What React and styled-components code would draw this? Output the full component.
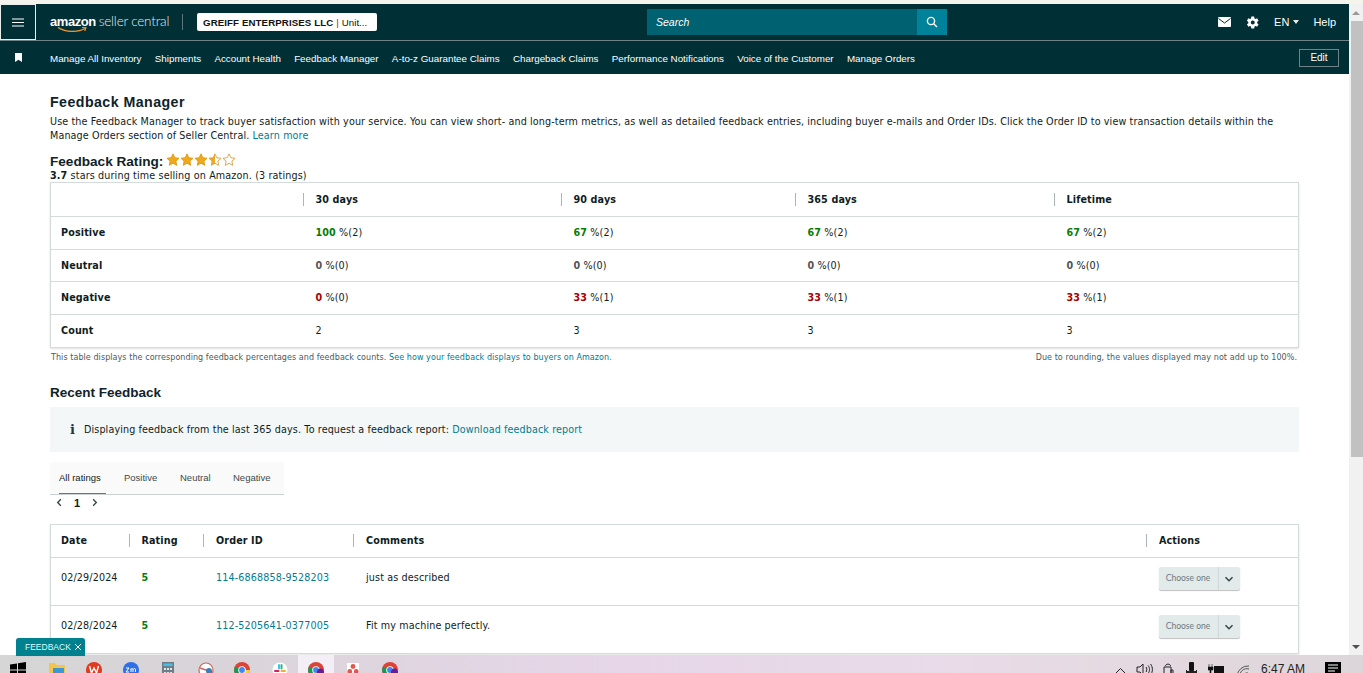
import React from "react";
import styled, { createGlobalStyle } from "styled-components";

const Global = createGlobalStyle`
  html, body { margin: 0; padding: 0; height: 100%; overflow: hidden; background: #fff; }
  * { box-sizing: border-box; }
`;
const Page = styled.div`
  height: 673px; width: 1363px; display: flex; flex-direction: column; position: relative; overflow: hidden;
  font-family: "DejaVu Sans", sans-serif; font-size: 9.6px; color: #0f1c22;
`;
const TopStrip = styled.div`height: 4px; background: #f4f4ec; flex: none;`;
const Viewport = styled.div`flex: 1; min-height: 0; display: flex;`;
const Column = styled.div`flex: 1; min-width: 0; display: flex; flex-direction: column; overflow: hidden;`;

const Header = styled.header`
  height: 37px; flex: none; background: #002f36; border-bottom: 1px solid #6f8285; display: flex; align-items: center;
  font-family: "Liberation Sans", sans-serif; color: #fff;
`;
const Burger = styled.button`
  width: 36px; height: 36px; background: transparent; border: 1px solid #e8eeee; padding: 0;
  display: flex; align-items: center; justify-content: center; flex: none;
`;
const Logo = styled.div`position: relative; margin-left: 14px; display: flex; align-items: baseline; gap: 3px; width: 120px; margin-top: -3px;`;
const LogoAmazon = styled.span`font: 700 13px "Liberation Sans", sans-serif; letter-spacing: -.45px; color: #fff;`;
const LogoSeller = styled.span`font: 300 13.5px "Lato", sans-serif; letter-spacing: -.2px; color: #e6eded; white-space: nowrap;`;
const Smile = styled.svg`position: absolute; left: 7px; top: 13px;`;
const LogoRule = styled.div`width: 1px; height: 16px; background: #5f7579; margin-left: 12px;`;
const Account = styled.div`
  margin-left: 14px; width: 180px; height: 18px; background: #fff; border-radius: 2px; display: flex; align-items: center; padding-left: 6px;
  color: #111; font-size: 9.7px; white-space: nowrap;
  b { font-weight: 700; letter-spacing: .1px; }
  i { font-style: normal; color: #8b2a4a; margin: 0 3px; }
`;
const SearchBox = styled.div`
  margin-left: 270px; width: 300px; height: 26px; background: #006170; display: flex; align-items: center; justify-content: space-between;
  font-style: italic; font-size: 10.5px; padding-left: 9px;
`;
const SearchBtn = styled.div`width: 30px; height: 26px; background: #00829a; display: flex; align-items: center; justify-content: center;`;
const HeaderRight = styled.div`margin-left: auto; display: flex; align-items: center; font-size: 11px; padding-right: 13px;`;
const Lang = styled.span`margin-left: 14px; display: flex; align-items: center; gap: 3px; `;
const Caret = styled.span`border: 3px solid transparent; border-top: 4px solid #e8eeee; border-bottom: 0; width: 0; height: 0; margin-left: 1px;`;
const HelpLink = styled.span`margin-left: 14px;`;
const GearWrap = styled.span`margin-left: 14px; display: flex;`;

const Nav = styled.nav`
  height: 33px; flex: none; background: #002f36; display: flex; align-items: center; color: #fff;
  font: 9.8px "Liberation Sans", sans-serif; padding-left: 15px; padding-right: 10px;
`;
const NavItems = styled.div`display: flex; gap: 13.3px; margin-left: 28px; white-space: nowrap; padding-top: 2px;`;
const EditBtn = styled.div`
  margin-left: auto; width: 40px; height: 18px; border: 1px solid #6f8285; display: flex; align-items: center; justify-content: center;
  font-size: 10px;
`;

const Content = styled.main`flex: 1; padding: 20px 50px 0; width: 100%; `;
const Title = styled.h1`font: 700 14.2px "Liberation Sans", sans-serif; margin: 0 0 5px; letter-spacing: .45px; color: #0f2229;`;
const Para = styled.p`margin: 0; line-height: 14px; width: 1245px; white-space: pre-line; letter-spacing: .12px;`;
const Link = styled.span`color: #007c8f;`;
const RatingHead = styled.div`display: flex; align-items: center; margin-top: 11px; font: 700 13.6px "Liberation Sans", sans-serif; height: 14px; color: #0f2229;`;
const StarRow = styled.span`display: flex; margin-left: 3px; margin-top: -3px;`;
const RatingLine = styled.div`line-height: 12px; margin-top: 2px; letter-spacing: .14px; b { font-weight: 700; }`;
const Card = styled.div`
  border: 1px solid #d5dbdb; box-shadow: 0 1px 2px rgba(0,0,0,.12); width: 1249px; background: #fff; overflow: hidden;
`;
const Row = styled.div`
  display: grid; grid-template-columns: ${p => p.$cols}; height: ${p => p.$h}px; align-items: center;
  padding-bottom: ${p => p.$pb ?? 0}px;
  & + & { border-top: 1px solid #d5dbdb; }
`;
const Cell = styled.div`padding-left: ${p => p.$pad ?? 12.5}px; white-space: nowrap; letter-spacing: .13px;`;
const HeadCell = styled(Cell)`
  font-weight: 700; position: relative;
  ${p => p.$rule ? `&::before { content: ""; position: absolute; left: 0; top: -1px; height: 13px; width: 1px; background: #aab7b8; }` : ""}
`;
const Label = styled(Cell)`font-weight: 700; padding-left: 10px;`;
const Num = styled.b`color: ${p => p.$c};`;
const Notes = styled.div`display: flex; justify-content: space-between; width: 1249px; padding: 5px 2px 0 1px; font-size: 8px; color: #4a5a60; letter-spacing: .07px;`;
const H2 = styled.h2`font: 700 13.5px "Liberation Sans", sans-serif; margin: 22px 0 0; line-height: 18px; color: #0f2229;`;
const InfoBar = styled.div`
  margin-top: 5px; height: 45px; width: 1249px; background: #f3f7f7; display: flex; align-items: center; padding-left: 20px; gap: 10px; letter-spacing: .12px;
`;
const InfoMark = styled.span`font: 700 13px "DejaVu Serif", serif; color: #24343a; width: 4px;`;
const Tabs = styled.div`
  margin-top: 10px; width: 234px; height: 33px; background: #fafafa; border-bottom: 1px solid #ccd2d2; display: flex;
  font: 9.5px "Liberation Sans", sans-serif; color: #3c4a50;
`;
const Tab = styled.div`
  height: 32px; margin-left: ${p => p.$ml}px; display: flex; align-items: center; width: ${p => p.$w}px; white-space: nowrap;
  ${p => p.$on ? "border-bottom: 1px solid #00a1b3; color: #0f1c22;" : ""}
`;
const Pager = styled.div`display: flex; align-items: center; height: 16px; padding-left: 5px; gap: 10px; font: 700 11px "Liberation Sans", sans-serif; margin-bottom: 13px;`;
const ChooseBtn = styled.div`
  margin-top: 3px; width: 81px; height: 23px; background: #e3eaea; border-radius: 2px; box-shadow: 0 1px 1px rgba(0,0,0,.25); display: flex; align-items: center;
  font: 8.5px "Lato", sans-serif; color: #6c7a80; letter-spacing: 0;
`;
const ChooseText = styled.span`width: 60px; text-align: center; border-right: 1px solid #cfd8d8; line-height: 23px; height: 23px;`;
const ChevronBox = styled.span`flex: 1; display: flex; justify-content: center;`;
const Green = styled.b`color: #067d06;`;

const Scrollbar = styled.div`width: 14px; flex: none; background: #f1f1f1; display: flex; flex-direction: column; align-items: center; justify-content: space-between; padding: 7px 0 6px; position: relative;`;
const Arrow = styled.span`width: 0; height: 0; border: 4px solid transparent; ${p => p.$up ? "border-top: 0; border-bottom: 4px solid #9a9a9a;" : "border-bottom: 0; border-top: 4px solid #505050;"}`;
const Thumb = styled.div`position: absolute; left: 2px; right: 0; top: 17px; height: 436px; background: #c1c1c1;`;

const Fb = styled.div`
  position: absolute; left: 16px; top: 638px; width: 69px; height: 18px; background: #00818f; border-radius: 3px 3px 0 0; color: #dff;
  font: 8.5px "Liberation Sans", sans-serif; display: flex; align-items: center; padding-left: 9px; gap: 3px; box-shadow: 0 0 1px #9ab;
`;

const Taskbar = styled.footer`
  height: 18px; flex: none; background: linear-gradient(90deg, #d6d6d6 0%, #d8d4d8 12%, #e6d6e8 45%, #e9dbe8 70%, #e2d8de 88%, #dcd6da 100%);
  position: relative; overflow: hidden; display: flex; align-items: flex-start;
`;
const TaskIcon = styled.span`position: absolute; left: ${p => p.$x}px; top: ${p => p.$y ?? 7}px; display: flex;`;
const Active = styled.div`position: absolute; left: 298px; top: 0; width: 36px; height: 18px; background: #f4eff6;`;
const Clock = styled.span`position: absolute; left: 1261px; top: 7px; font: 12px "Liberation Sans", sans-serif; color: #222; white-space: nowrap;`;

const Star = ({ fill }) => (
  <svg width="14" height="13" viewBox="0 0 24 23">
    <defs>
      <linearGradient id="half"><stop offset="50%" stopColor="#f0a81c" /><stop offset="50%" stopColor="#fff" /></linearGradient>
    </defs>
    <path d="M12 1.5l3.2 6.9 7.5.9-5.6 5.1 1.5 7.4L12 18.1l-6.600 3.700 1.500-7.400L1.300 9.300l7.500-.9z"
      fill={fill === 1 ? "#f0a81c" : fill === 0.5 ? "url(#half)" : "#fff"} stroke={fill === 1 ? "#e09a12" : "#d8a040"} strokeWidth="1.6" />
  </svg>
);
const Chrome = ({ badge }) => (
  <svg width="16" height="16" viewBox="0 0 16 16">
    <circle cx="8" cy="8" r="8" fill="#db4437" />
    <path d="M8 8L1 4.600A8 8 0 0 0 8 16z" fill="#0f9d58" />
    <path d="M8 8h8a8 8 0 0 1-8 8z" fill="#ffcd40" />
    <circle cx="8" cy="8" r="3.800" fill="#fff" /><circle cx="8" cy="8" r="2.900" fill="#4285f4" />
    {badge && <circle cx="12.500" cy="10" r="3.500" fill="#6a1b9a" />}
  </svg>
);

const cols1 = "252px 258px 234px 259px 1fr";
const cols2 = "78px 74px 150px 793px 1fr";
const rows = [
  ["Positive", ["100", "#067d06", "(2)"], ["67", "#067d06", "(2)"], ["67", "#067d06", "(2)"], ["67", "#067d06", "(2)"]],
  ["Neutral", ["0", "#555", "(0)"], ["0", "#555", "(0)"], ["0", "#555", "(0)"], ["0", "#555", "(0)"]],
  ["Negative", ["0", "#a80000", "(0)"], ["33", "#a80000", "(1)"], ["33", "#a80000", "(1)"], ["33", "#a80000", "(1)"]],
];
const feedback = [
  ["02/29/2024", "114-6868858-9528203", "just as described"],
  ["02/28/2024", "112-5205641-0377005", "Fit my machine perfectly."],
];
const Chev = ({ dir = "down", color = "#33464c", size = 10 }) => (
  <svg width={size} height={size} viewBox="0 0 10 10" fill="none" stroke={color} strokeWidth="1.5">
    {dir === "down" && <path d="M1.500 3.200L5 6.700l3.500-3.500" />}
    {dir === "left" && <path d="M6.500 1.500L3 5l3.500 3.500" />}
    {dir === "right" && <path d="M3.500 1.500L7 5 3.500 8.500" />}
  </svg>
);

export default function App() {
  return (
    <Page>
      <Global />
      <TopStrip />
      <Viewport>
        <Column>
          <Header>
            <Burger aria-label="menu">
              <svg width="12" height="9" viewBox="0 0 12 9" stroke="#fff" strokeWidth="1.2"><path d="M0 1h12M0 4.500h12M0 8h12" /></svg>
            </Burger>
            <Logo>
              <LogoAmazon>amazon</LogoAmazon><LogoSeller>seller central</LogoSeller>
              <Smile width="34" height="8" viewBox="0 0 34 8" fill="none"><path d="M1 1.500C9 6.500 21 6.500 28 2.500" stroke="#f29a2e" strokeWidth="1.400" /><path d="M25 1.500l4 .3-1.300 3.200" stroke="#f29a2e" strokeWidth="1.100" /></Smile>
            </Logo>
            <LogoRule />
            <Account><b>GREIFF ENTERPRISES LLC</b><i>|</i>Unit...</Account>
            <SearchBox>
              Search
              <SearchBtn>
                <svg width="12" height="12" viewBox="0 0 12 12" fill="none" stroke="#fff" strokeWidth="1.400"><circle cx="5" cy="5" r="3.600" /><path d="M7.700 7.700L11 11" /></svg>
              </SearchBtn>
            </SearchBox>
            <HeaderRight>
              <svg width="13" height="10" viewBox="0 0 13 10"><rect width="13" height="10" rx="1" fill="#fff" /><path d="M.5 1.500L6.500 6l6-4.500" fill="none" stroke="#002f36" strokeWidth="1" /></svg>
              <GearWrap>
                <svg width="15" height="15" viewBox="0 0 24 24"><path fill="#fff" d="M19.400 13a7.500 7.500 0 0 0 0-2l2.300-1.700-2.300-4-2.600 1.100a7.500 7.500 0 0 0-1.700-1L14.700 2.500h-4.600l-.4 2.900a7.500 7.500 0 0 0-1.700 1L5.400 5.300l-2.300 4L5.400 11a7.500 7.500 0 0 0 0 2l-2.300 1.700 2.300 4L8 17.600a7.500 7.500 0 0 0 1.700 1l.4 2.900h4.600l.4-2.900a7.500 7.500 0 0 0 1.700-1l2.600 1.100 2.300-4zM12.400 15.200a3.200 3.200 0 1 1 0-6.400 3.200 3.200 0 0 1 0 6.400z" /></svg>
              </GearWrap>
              <Lang>EN<Caret /></Lang>
              <HelpLink>Help</HelpLink>
            </HeaderRight>
          </Header>
          <Nav>
            <svg width="7" height="9" viewBox="0 0 7 9"><path d="M0 0h7v9L3.500 6.800 0 9z" fill="#fff" /></svg>
            <NavItems>
              {["Manage All Inventory", "Shipments", "Account Health", "Feedback Manager", "A-to-z Guarantee Claims", "Chargeback Claims", "Performance Notifications", "Voice of the Customer", "Manage Orders"].map(t => <span key={t}>{t}</span>)}
            </NavItems>
            <EditBtn>Edit</EditBtn>
          </Nav>
          <Content>
            <Title>Feedback Manager</Title>
            <Para>{"Use the Feedback Manager to track buyer satisfaction with your service. You can view short- and long-term metrics, as well as detailed feedback entries, including buyer e-mails and Order IDs. Click the Order ID to view transaction details within the\nManage Orders section of Seller Central. "}<Link>Learn more</Link></Para>
            <RatingHead>Feedback Rating:<StarRow><Star fill={1} /><Star fill={1} /><Star fill={1} /><Star fill={0.5} /><Star fill={0} /></StarRow></RatingHead>
            <RatingLine><b>3.7</b> stars during time selling on Amazon. (3 ratings)</RatingLine>
            <Card>
              <Row $cols={cols1} $h={33}>
                <HeadCell />
                {["30 days", "90 days", "365 days", "Lifetime"].map(h => <HeadCell key={h} $rule>{h}</HeadCell>)}
              </Row>
              {rows.map(([name, ...vals]) => (
                <Row key={name} $cols={cols1} $h={32.5}>
                  <Label>{name}</Label>
                  {vals.map(([n, c, r], i) => <Cell key={i}><Num $c={c}>{n}</Num> %{r}</Cell>)}
                </Row>
              ))}
              <Row $cols={cols1} $h={33}>
                <Label>Count</Label>
                {["2", "3", "3", "3"].map((v, i) => <Cell key={i}>{v}</Cell>)}
              </Row>
            </Card>
            <Notes>
              <span>This table displays the corresponding feedback percentages and feedback counts. <Link>See how your feedback displays to buyers on Amazon.</Link></span>
              <span>Due to rounding, the values displayed may not add up to 100%.</span>
            </Notes>
            <H2>Recent Feedback</H2>
            <InfoBar>
              <InfoMark>i</InfoMark>
              <span>Displaying feedback from the last 365 days. To request a feedback report: <Link>Download feedback report</Link></span>
            </InfoBar>
            <Tabs>
              <Tab $on $w={47} $ml={9}>All ratings</Tab>
              <Tab $w={34} $ml={18}>Positive</Tab>
              <Tab $w={31} $ml={22}>Neutral</Tab>
              <Tab $w={40} $ml={22}>Negative</Tab>
            </Tabs>
            <Pager>
              <Chev dir="left" size={9} />
              <span>1</span>
              <Chev dir="right" size={9} />
            </Pager>
            <Card>
              <Row $cols={cols2} $h={32}>
                <HeadCell $pad={10}>Date</HeadCell>
                <HeadCell $rule>Rating</HeadCell>
                <HeadCell $rule $pad={13}>Order ID</HeadCell>
                <HeadCell $rule $pad={13}>Comments</HeadCell>
                <HeadCell $rule $pad={13}>Actions</HeadCell>
              </Row>
              {feedback.map(([d, o, c]) => (
                <Row key={o} $cols={cols2} $h={48} $pb={8}>
                  <Cell $pad={10}>{d}</Cell>
                  <Cell><Green>5</Green></Cell>
                  <Cell $pad={13}><Link>{o}</Link></Cell>
                  <Cell $pad={13}>{c}</Cell>
                  <Cell>
                    <ChooseBtn><ChooseText>Choose one</ChooseText><ChevronBox><Chev /></ChevronBox></ChooseBtn>
                  </Cell>
                </Row>
              ))}
            </Card>
          </Content>
        </Column>
        <Scrollbar>
          <Arrow $up /><Thumb /><Arrow />
        </Scrollbar>
      </Viewport>
      <Taskbar>
        <Active />
        <TaskIcon $x={10}><svg width="16" height="16" viewBox="0 0 16 16" fill="#000"><path d="M0 2.500l7-1v6H0zM8 1.300l8-1.200V7.500H8zM0 8.500h7v6l-7-1zM8 8.500h8V16l-8-1.200z" /></svg></TaskIcon>
        <TaskIcon $x={49} $y={8}><svg width="16" height="16" viewBox="0 0 16 16"><path d="M0 0h6l2 2h8v14H0z" fill="#f5c54a" /><rect x="4" y="5" width="11" height="8" fill="#3b97d6" /></svg></TaskIcon>
        <TaskIcon $x={86}><svg width="16" height="16" viewBox="0 0 16 16"><circle cx="8" cy="8" r="8" fill="#e23a1f" /><path d="M3.500 4l2 7 2.500-5 2.500 5 2-7" fill="none" stroke="#fff" strokeWidth="1.400" /></svg></TaskIcon>
        <TaskIcon $x={123}><svg width="16" height="16" viewBox="0 0 16 16"><circle cx="8" cy="8" r="8" fill="#2d70e8" /><path d="M3 6h3L3 10h3M8 10V6.500m0 1c.8-1.500 2-1 2 0V10m0-2.500c.8-1.500 2.500-1 2.500 0V10" fill="none" stroke="#fff" strokeWidth="1" /></svg></TaskIcon>
        <TaskIcon $x={162}><svg width="12" height="16" viewBox="0 0 12 16"><rect width="12" height="16" fill="#6f7d88" /><rect x="1.500" y="1.500" width="9" height="2.500" fill="#46c2e8" /><path d="M2 6h2v2H2zM5 6h2v2H5zM8 6h2v2H8zM2 10h2v2H2zM5 10h2v2H5zM8 10h2v2H8z" fill="#dfe6ea" /></svg></TaskIcon>
        <TaskIcon $x={198}><svg width="16" height="16" viewBox="0 0 16 16"><circle cx="8" cy="8" r="7" fill="#fff" stroke="#c9685c" strokeWidth="1.200" /><path d="M2 6l12 4" stroke="#c9685c" strokeWidth="1.500" /><circle cx="11" cy="9" r="3" fill="#3d7fb5" /></svg></TaskIcon>
        <TaskIcon $x={234}><Chrome /></TaskIcon>
        <TaskIcon $x={272}><svg width="16" height="16" viewBox="0 0 16 16"><circle cx="8" cy="8" r="8" fill="#fff" stroke="#c8c8c8" strokeWidth=".6" /><path d="M7 3v3.500" stroke="#36c5f0" strokeWidth="2" strokeLinecap="round" /><path d="M3 9h3.500" stroke="#e01e5a" strokeWidth="2" strokeLinecap="round" /><path d="M9.500 3v3.500" stroke="#2eb67d" strokeWidth="2" strokeLinecap="round" /><path d="M9.500 9H13" stroke="#ecb22e" strokeWidth="2" strokeLinecap="round" /></svg></TaskIcon>
        <TaskIcon $x={308}><Chrome badge /></TaskIcon>
        <TaskIcon $x={347} $y={8}><svg width="12" height="16" viewBox="0 0 12 16"><rect width="12" height="16" fill="#fff" /><circle cx="6" cy="3.500" r="2.400" fill="#e2574c" /><circle cx="2.800" cy="8.500" r="2.400" fill="#e2574c" /><circle cx="9.200" cy="8.500" r="2.400" fill="#e2574c" /></svg></TaskIcon>
        <TaskIcon $x={382}><Chrome badge /></TaskIcon>
        <TaskIcon $x={1114} $y={12}><svg width="13" height="7" viewBox="0 0 13 7" fill="none" stroke="#222" strokeWidth="1"><path d="M1 7l5.500-5.500L12 7" /></svg></TaskIcon>
        <TaskIcon $x={1136} $y={8}><svg width="17" height="13" viewBox="0 0 17 13" fill="none" stroke="#222" strokeWidth="1"><path d="M1 4h3l3-3v11L4 9H1zM10 4c1 1 1 4 0 5M12 2.500c2 2 2 6 0 8M14.500 1c2.500 3 2.500 8 0 11" /></svg></TaskIcon>
        <TaskIcon $x={1163} $y={8}><svg width="11" height="14" viewBox="0 0 11 14" fill="none" stroke="#222" strokeWidth="1"><path d="M2.500 3c0-2.500 5-2.500 5 0M1 4h7v10H1zM8 7h2v4H8z" /></svg></TaskIcon>
        <TaskIcon $x={1186} $y={7}><svg width="11" height="16" viewBox="0 0 11 16"><rect x="3" width="5" height="9" rx="1" fill="#111" /><path d="M0 8h1v1h9V8h1v3H0z" fill="#222" /></svg></TaskIcon>
        <TaskIcon $x={1208} $y={9}><svg width="16" height="13" viewBox="0 0 16 13"><rect x="6" y="2" width="10" height="7" fill="#111" /><path d="M1 0v3M4 0v3M0 3h5v3H3v3H2V6H0z" fill="#111" stroke="#111" strokeWidth=".6" /></svg></TaskIcon>
        <TaskIcon $x={1236} $y={10}><svg width="14" height="12" viewBox="0 0 14 12" fill="none" stroke="#555" strokeWidth="1"><path d="M1 11a11 11 0 0 1 12-10M4 12a7 7 0 0 1 9-8M7 12a4 4 0 0 1 5-4" /></svg></TaskIcon>
        <Clock>6:47 AM</Clock>
        <TaskIcon $x={1325}><svg width="16" height="13" viewBox="0 0 16 13"><rect width="16" height="13" fill="#000" /><path d="M3 3h10M3 6h10M3 9h7" stroke="#fff" strokeWidth="1" /></svg></TaskIcon>
      </Taskbar>
      <Fb>FEEDBACK <svg width="8" height="8" viewBox="0 0 8 8" stroke="#fff" strokeWidth="1"><path d="M1 1l6 6M7 1L1 7" /></svg></Fb>
    </Page>
  );
}
